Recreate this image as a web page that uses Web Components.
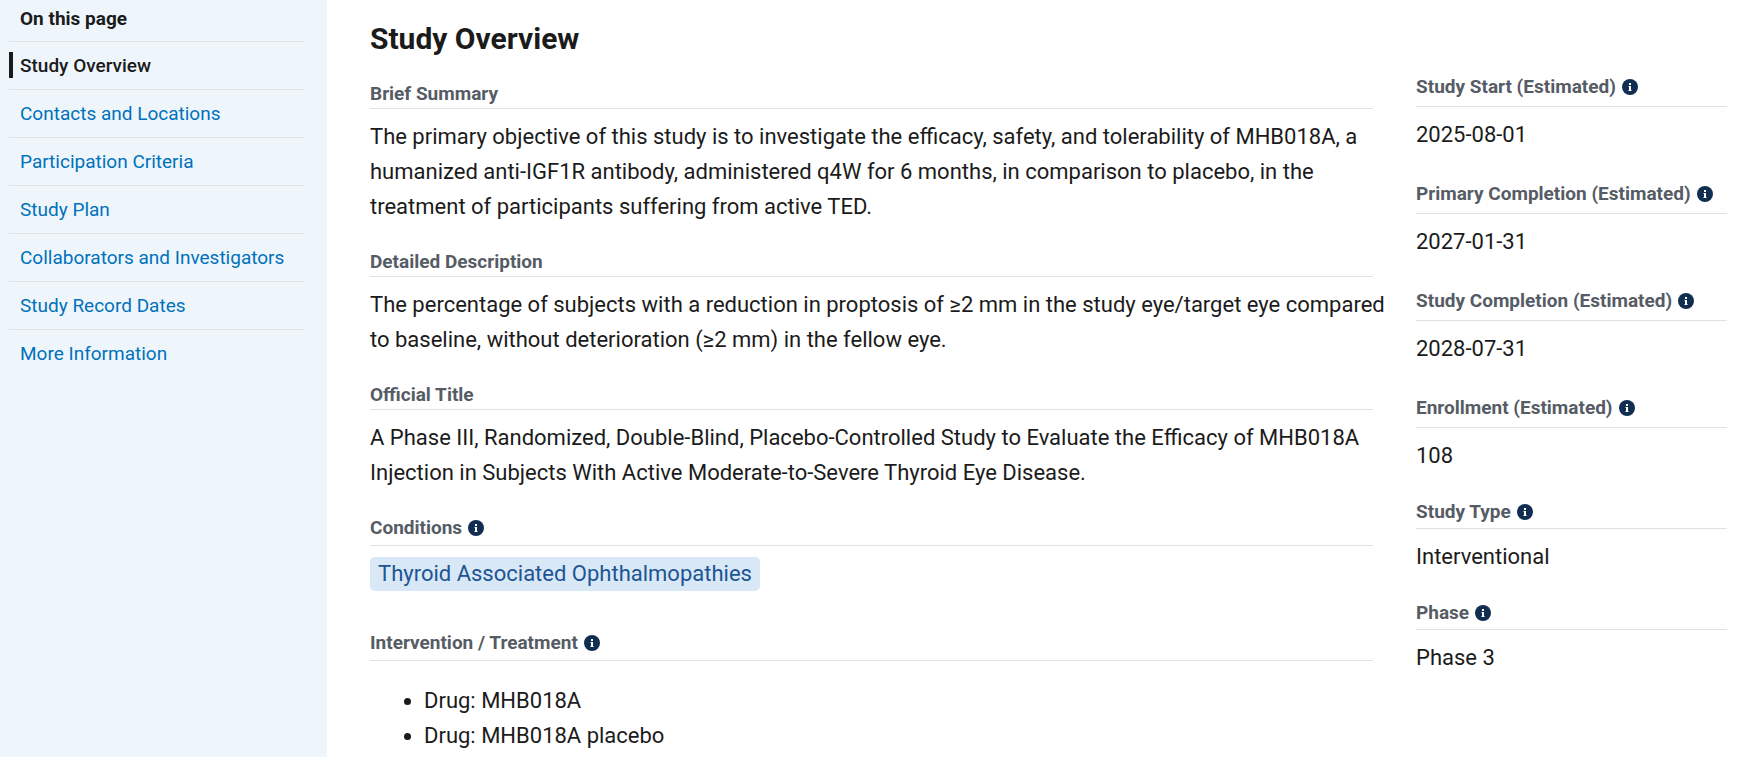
<!DOCTYPE html>
<html lang="en"><head><meta charset="utf-8"><title>Study Overview</title>
<style>body{margin:0;font-family:Roboto,sans-serif;color:#1b1b1b;background:#fff}</style></head><body>
<study-page></study-page>
<script>
const define=(name,html)=>customElements.define(name,class extends HTMLElement{
constructor(){super();const t=document.createElement('template');t.innerHTML=html;this.attachShadow({mode:'open'}).append(t.content.cloneNode(true));}
connectedCallback(){if(this.hasAttribute('href')){this.shadowRoot.querySelector('a').href=this.getAttribute('href')}}
});
define('info-button',`<style>:host{display:inline-flex}button{all:unset;display:flex;cursor:pointer}svg{display:block}</style>
<button type="button" aria-label="More information"><svg width="16" height="16" viewBox="0 0 16 16"><circle cx="8" cy="8" r="8" fill="#112e51"/><path fill="#fff" d="M7 4h2v2H7zM6.4 6.9H9v4.3h.7v.9H6.3v-.9H7V7.8h-.6z"/></svg></button>`);
define('nav-item',`<style>:host{display:block;border-top:1px solid #dfe1e2}a{display:block;padding:12px 11px;font-size:19px;line-height:23px;color:#0071bc;text-decoration:none}
:host([current]) a{color:#1b1b1b;font-weight:500;position:relative}:host([current]) a::before{content:"";position:absolute;left:0;top:10px;bottom:11px;width:4px;background:#1b1b1b}</style><a><slot></slot></a>`);
define('page-nav',`<style>:host{display:block;box-sizing:border-box;background:#eff6fb;padding:0 22px 0 9px}h2{margin:0;padding:7px 11px 11px;font-size:19px;line-height:23px;font-weight:700}</style>
<nav aria-label="On this page"><h2>On this page</h2>
<nav-item href="#overview" current>Study Overview</nav-item><nav-item href="#contacts">Contacts and Locations</nav-item><nav-item href="#criteria">Participation Criteria</nav-item><nav-item href="#plan">Study Plan</nav-item><nav-item href="#collaborators">Collaborators and Investigators</nav-item><nav-item href="#dates">Study Record Dates</nav-item><nav-item href="#more">More Information</nav-item></nav>`);
define('study-field',`<style>:host{display:block}h3{display:flex;align-items:center;gap:6px;margin:0;padding-bottom:var(--label-gap,3px);border-bottom:1px solid #dfe1e2;font-size:19px;line-height:23px;font-weight:700;color:#565c65}
info-button{display:none}:host([info]) info-button{display:inline-flex}
.body{font-size:22px;line-height:35px;padding-top:10px}::slotted(p){margin:0 -12px 0 0}::slotted(ul){margin:12px 0 0;padding-left:54px}</style>
<h3><slot name="label"></slot><info-button></info-button></h3><div class="body"><slot></slot></div>`);
define('condition-tag',`<style>:host{display:flex;padding:1px 0 14px}span{background:#d9e8f6;color:#205493;border-radius:5px;padding:0 8px;line-height:34px}</style><span><slot></slot></span>`);
define('study-page',`<style>:host{display:grid;grid-template-columns:327px minmax(0,1fr) 311px;min-height:100vh;column-gap:43px;padding-right:32px;box-sizing:border-box;overflow:hidden}
h1{margin:22px 0 26px;font-size:30px;line-height:34px;font-weight:700}
.main study-field+study-field{margin-top:26px}.main study-field[info]{--label-gap:6px}
aside{padding-top:75px}
aside study-field{--label-gap:8px}aside study-field+study-field{margin-top:30px}
aside study-field[compact]{--label-gap:5px;margin-top:27px}</style>
<page-nav></page-nav>
<main class="main" id="overview"><h1>Study Overview</h1>
<study-field><span slot="label">Brief Summary</span><p>The primary objective of this study is to investigate the efficacy, safety, and tolerability of MHB018A, a humanized anti-IGF1R antibody, administered q4W for 6 months, in comparison to placebo, in the treatment of participants suffering from active TED.</p></study-field>
<study-field><span slot="label">Detailed Description</span><p>The percentage of subjects with a reduction in proptosis of ≥2 mm in the study eye/target eye compared to baseline, without deterioration (≥2 mm) in the fellow eye.</p></study-field>
<study-field><span slot="label">Official Title</span><p>A Phase III, Randomized, Double-Blind, Placebo-Controlled Study to Evaluate the Efficacy of MHB018A Injection in Subjects With Active Moderate-to-Severe Thyroid Eye Disease.</p></study-field>
<study-field info><span slot="label">Conditions</span><condition-tag>Thyroid Associated Ophthalmopathies</condition-tag></study-field>
<study-field info><span slot="label">Intervention / Treatment</span><ul><li>Drug: MHB018A</li><li>Drug: MHB018A placebo</li></ul></study-field></main>
<aside aria-label="Study details">
<study-field info><span slot="label">Study Start (Estimated)</span><p>2025-08-01</p></study-field>
<study-field info><span slot="label">Primary Completion (Estimated)</span><p>2027-01-31</p></study-field>
<study-field info><span slot="label">Study Completion (Estimated)</span><p>2028-07-31</p></study-field>
<study-field info><span slot="label">Enrollment (Estimated)</span><p>108</p></study-field>
<study-field info compact><span slot="label">Study Type</span><p>Interventional</p></study-field>
<study-field info compact><span slot="label">Phase</span><p>Phase 3</p></study-field></aside>`);
</script></body></html>
